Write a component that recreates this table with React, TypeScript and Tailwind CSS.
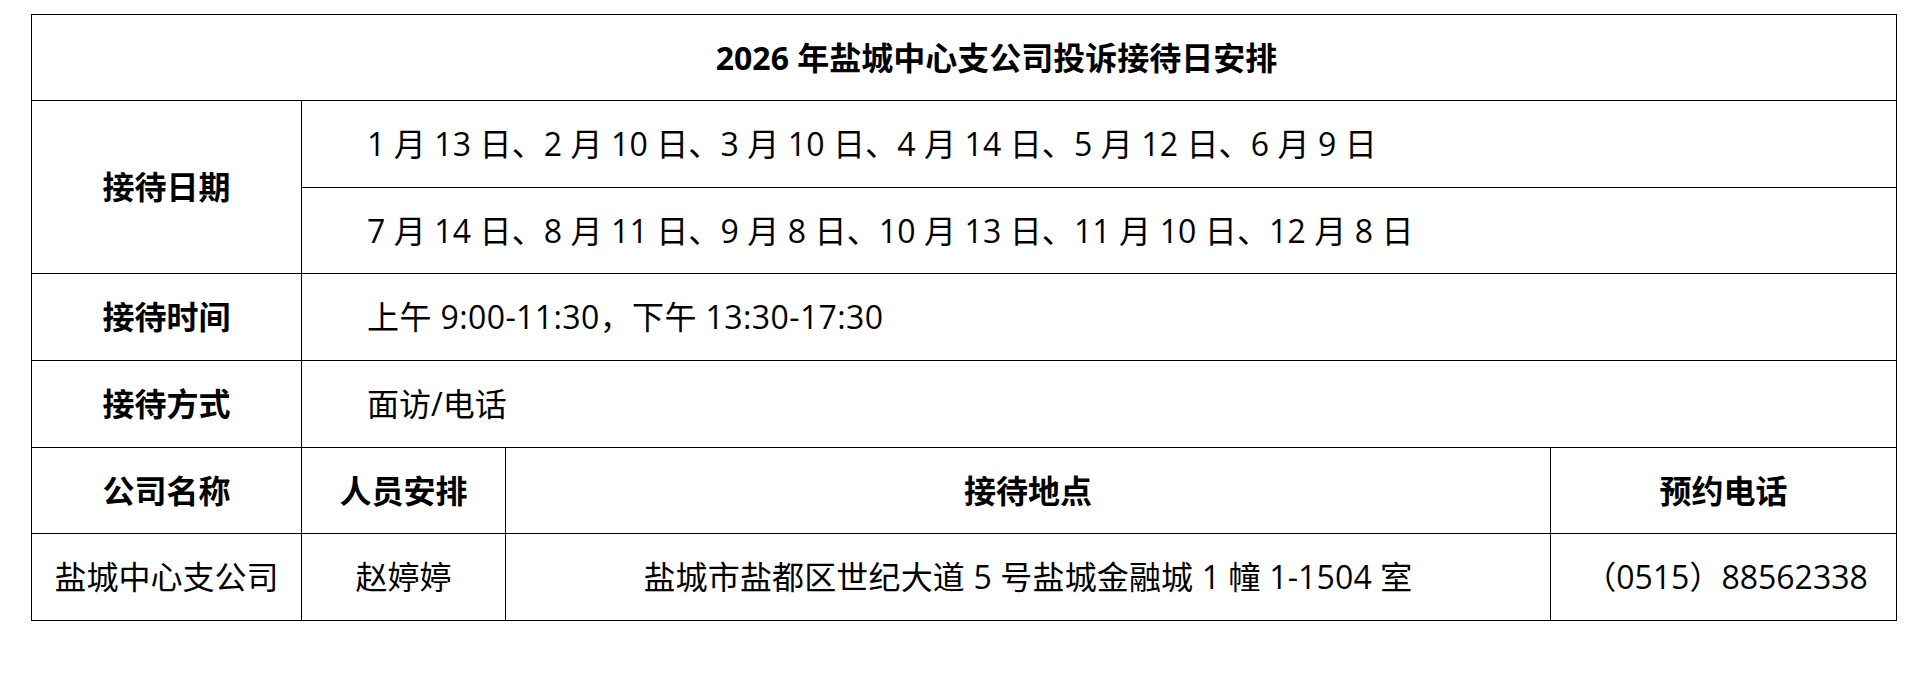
import React from "react";

const font = "font-['Open_Sans','Noto_Sans_CJK_SC',sans-serif]";

function Cell({
  children,
  className = "",
}: {
  children?: React.ReactNode;
  className?: string;
}) {
  return (
    <div className={`bg-white flex items-center text-black leading-none whitespace-nowrap ${className}`}>
      {children}
    </div>
  );
}

export default function App() {
  return (
    <div className={`bg-white w-[1927px] h-[685px] pt-[14px] pl-[31px] ${font} text-[32px]`}>
      <div className="grid w-max bg-black gap-px p-px grid-cols-[269px_203px_1044px_345px] grid-rows-[85px_86px_85px_86px_86px_85px_86px]">
        <Cell className="col-span-4 justify-center pl-[65px] font-bold">
          2026 年盐城中心支公司投诉接待日安排
        </Cell>

        <Cell className="row-span-2 justify-center font-bold">接待日期</Cell>
        <Cell className="col-span-3 pl-[65px] tracking-[0.1px]">
          1 月 13 日、2 月 10 日、3 月 10 日、4 月 14 日、5 月 12 日、6 月 9 日
        </Cell>
        <Cell className="col-span-3 pl-[65px] tracking-[0.1px]">
          7 月 14 日、8 月 11 日、9 月 8 日、10 月 13 日、11 月 10 日、12 月 8 日
        </Cell>

        <Cell className="justify-center font-bold">接待时间</Cell>
        <Cell className="col-span-3 pl-[65px] tracking-[0.4px]">上午 9:00-11:30，下午 13:30-17:30</Cell>

        <Cell className="justify-center font-bold">接待方式</Cell>
        <Cell className="col-span-3 pl-[65px]">面访/电话</Cell>

        <Cell className="justify-center font-bold">公司名称</Cell>
        <Cell className="justify-center font-bold">人员安排</Cell>
        <Cell className="justify-center font-bold">接待地点</Cell>
        <Cell className="justify-center font-bold">预约电话</Cell>

        <Cell className="justify-center">盐城中心支公司</Cell>
        <Cell className="justify-center">赵婷婷</Cell>
        <Cell className="justify-center tracking-[0.15px]">盐城市盐都区世纪大道 5 号盐城金融城 1 幢 1-1504 室</Cell>
        <Cell className="justify-center pl-[5px]">（0515）88562338</Cell>
      </div>
    </div>
  );
}
